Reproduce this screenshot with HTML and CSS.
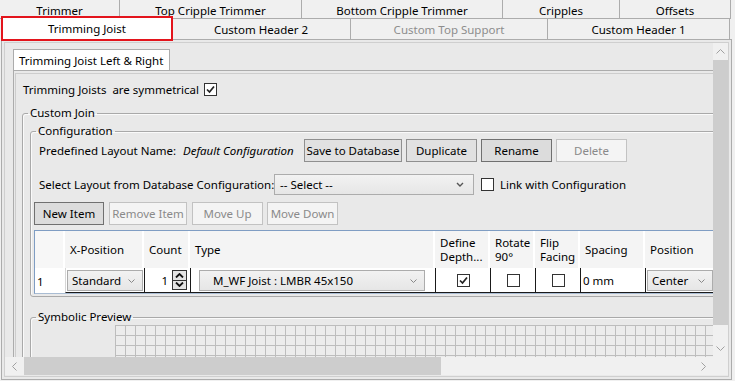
FILE: index.html
```html
<!DOCTYPE html>
<html lang="en">
<head>
  <meta charset="UTF-8" />
  <title>Trimming Joist</title>
  <link rel="stylesheet" href="styles.css">
</head>
<body>
  <!-- main tab strip, two rows -->
  <div class="tabstrip">
    <div class="tabrow first">
      <div class="tab">Trimmer</div>
      <div class="tab">Top Cripple Trimmer</div>
      <div class="tab">Bottom Cripple Trimmer</div>
      <div class="tab">Cripples</div>
      <div class="tab">Offsets</div>
    </div>
    <div class="tabrow second">
      <div class="tab selected">Trimming Joist</div>
      <div class="tab">Custom Header 2</div>
      <div class="tab disabled">Custom Top Support</div>
      <div class="tab">Custom Header 1</div>
    </div>
  </div>

  <div class="pane">
    <div class="pane-inner">
      <div class="scroller">
        <div class="viewport">
          <div class="content">
            <div class="inner-tab">Trimming Joist Left &amp; Right</div>
            <div class="inner-page">
              <div class="inner-frame">
                <div class="sym-row">
                  <span class="sym-label">Trimming Joists&nbsp; are symmetrical</span>
                  <span class="check">
                    <svg width="11" height="11" viewBox="0 0 11 11"><path d="M2 5.5 L4.5 8 L9 2.5" fill="none" stroke="#222" stroke-width="1.7"/></svg>
                  </span>
                </div>

                <fieldset class="group join">
                  <legend>Custom Join</legend>

                  <fieldset class="group config">
                    <legend>Configuration</legend>

                    <div class="row predefined">
                      <span class="lbl-name">Predefined Layout Name:</span>
                      <span class="lbl-value">Default Configuration</span>
                      <button class="btn w-save">Save to Database</button>
                      <button class="btn w-71">Duplicate</button>
                      <button class="btn w-71 strong">Rename</button>
                      <button class="btn w-71" disabled>Delete</button>
                    </div>

                    <div class="row select-row">
                      <span class="lbl-select">Select Layout from Database Configuration:</span>
                      <div class="combo w-select">
                        <span>-- Select --</span>
                        <svg class="chev" width="8" height="5" viewBox="0 0 8 5"><path d="M1 1 L4 4 L7 1" fill="none" stroke="#555" stroke-width="1.4"/></svg>
                      </div>
                      <span class="check empty"></span>
                      <span class="link-lbl">Link with Configuration</span>
                    </div>

                    <div class="row actions">
                      <button class="btn strong w-new">New Item</button>
                      <button class="btn w-remove" disabled>Remove Item</button>
                      <button class="btn w-move" disabled>Move Up</button>
                      <button class="btn w-move" disabled>Move Down</button>
                    </div>

                    <div class="datagrid">
                      <div class="gh corner"></div>
                      <div class="gh">X-Position</div>
                      <div class="gh">Count</div>
                      <div class="gh">Type</div>
                      <div class="gh">Define<br>Depth...</div>
                      <div class="gh">Rotate<br>90°</div>
                      <div class="gh">Flip<br>Facing</div>
                      <div class="gh">Spacing</div>
                      <div class="gh">Position</div>

                      <div class="gc rowhead">1</div>
                      <div class="gc first-col">
                        <div class="combo cell-combo w-std">
                          <span>Standard</span>
                          <svg class="chev" width="7" height="4" viewBox="0 0 7 4"><path d="M0.5 0.5 L3.5 3.5 L6.5 0.5" fill="none" stroke="#888" stroke-width="1"/></svg>
                        </div>
                      </div>
                      <div class="gc count">
                        <span>1</span>
                        <div class="spinner">
                          <div class="spin"><svg width="9" height="5" viewBox="0 0 9 5"><path d="M1 4.5 L4.5 1 L8 4.5" fill="none" stroke="#111" stroke-width="1.8"/></svg></div>
                          <div class="spin"><svg width="9" height="5" viewBox="0 0 9 5"><path d="M1 0.5 L4.5 4 L8 0.5" fill="none" stroke="#111" stroke-width="1.8"/></svg></div>
                        </div>
                      </div>
                      <div class="gc">
                        <div class="combo cell-combo w-type">
                          <span>M_WF Joist : LMBR 45x150</span>
                          <svg class="chev" width="7" height="4" viewBox="0 0 7 4"><path d="M0.5 0.5 L3.5 3.5 L6.5 0.5" fill="none" stroke="#888" stroke-width="1"/></svg>
                        </div>
                      </div>
                      <div class="gc center">
                        <span class="check">
                          <svg width="11" height="11" viewBox="0 0 11 11"><path d="M2 5.5 L4.5 8 L9 2.5" fill="none" stroke="#222" stroke-width="1.7"/></svg>
                        </span>
                      </div>
                      <div class="gc center"><span class="check empty"></span></div>
                      <div class="gc center"><span class="check empty"></span></div>
                      <div class="gc spacing">0 mm</div>
                      <div class="gc">
                        <div class="combo cell-combo w-pos">
                          <span>Center</span>
                          <svg class="chev" width="7" height="4" viewBox="0 0 7 4"><path d="M0.5 0.5 L3.5 3.5 L6.5 0.5" fill="none" stroke="#888" stroke-width="1"/></svg>
                        </div>
                      </div>
                    </div>
                  </fieldset>

                  <fieldset class="group preview">
                    <legend>Symbolic Preview</legend>
                    <div class="preview-grid"></div>
                  </fieldset>
                </fieldset>
              </div>
            </div>
          </div>
        </div>

        <div class="vscroll">
          <div class="arrow">
            <svg width="9" height="5" viewBox="0 0 9 5"><path d="M0.5 4.5 L4.5 0.5 L8.5 4.5" fill="none" stroke="#a0a0a0" stroke-width="1"/></svg>
          </div>
          <div class="vthumb"></div>
          <div class="vtrack"></div>
          <div class="arrow">
            <svg width="9" height="5" viewBox="0 0 9 5"><path d="M0.5 0.5 L4.5 4.5 L8.5 0.5" fill="none" stroke="#a0a0a0" stroke-width="1"/></svg>
          </div>
        </div>
      </div>

      <div class="hscroll">
        <div class="harrow">
          <svg width="5" height="9" viewBox="0 0 5 9"><path d="M4.5 0.5 L0.5 4.5 L4.5 8.5" fill="none" stroke="#a0a0a0" stroke-width="1"/></svg>
        </div>
        <div class="hthumb"></div>
        <div class="htrack"></div>
        <div class="harrow">
          <svg width="5" height="9" viewBox="0 0 5 9"><path d="M0.5 0.5 L4.5 4.5 L0.5 8.5" fill="none" stroke="#a0a0a0" stroke-width="1"/></svg>
        </div>
        <div class="corner-box"></div>
      </div>
    </div>
  </div>
</body>
</html>
```

FILE: styles.css
```css
* {
  margin: 0;
  padding: 0;
  box-sizing: border-box;
}

body {
  font-family: "Noto Sans", "Liberation Sans", sans-serif;
  font-size: 11.5px;
  color: #000;
  background: #f0f0f0;
  width: 735px;
  height: 381px;
  overflow: hidden;
}

/* ---------- outer tabs ---------- */

.tabstrip {
  height: 39px;
}

.tabrow {
  display: flex;
}

.tabrow.first {
  height: 19px;
}

.tabrow.second {
  height: 20px;
  padding-left: 2px;
}

.tab {
  display: flex;
  align-items: center;
  justify-content: center;
  background: #f0f0f0;
  border-right: 1px solid #acacac;
  white-space: nowrap;
}

.tabrow.first .tab {
  border-bottom: 1px solid #acacac;
  padding-top: 2px;
}

.tabrow.first .tab:nth-child(1) { width: 120px; }
.tabrow.first .tab:nth-child(2) { width: 182px; }
.tabrow.first .tab:nth-child(3) { width: 201px; }
.tabrow.first .tab:nth-child(4) { width: 117px; }
.tabrow.first .tab:nth-child(5) { width: 111px; }

.tabrow.second .tab:nth-child(1) { width: 170px; }
.tabrow.second .tab:nth-child(2) { width: 179px; }
.tabrow.second .tab:nth-child(3) { width: 197px; }
.tabrow.second .tab:nth-child(4) { width: 182px; }

.tab.disabled {
  color: #8d8d8d;
}

.tab.selected {
  position: relative;
  z-index: 2;
  height: 23px;
  margin-top: -2px;
  background: #fff;
  border: 1px solid #acacac;
  border-bottom: none;
  outline: 2px solid #e3141c;
  outline-offset: -1px;
  padding-bottom: 1px;
}

/* ---------- pane + scroll viewer ---------- */

.pane {
  margin-left: 1px;
  width: 731px;
  height: 341px;
  border: 1px solid #acacac;
  background: #e9e9e9;
  padding: 2px;
}

.pane-inner {
  height: 100%;
  border: 1px solid #cfcfcf;
  display: flex;
  flex-direction: column;
}

.scroller {
  display: flex;
  height: 314px;
}

.viewport {
  flex: 1;
  overflow: hidden;
}

.vscroll {
  width: 15px;
  background: #f0f0f0;
  display: flex;
  flex-direction: column;
}

.vscroll .arrow {
  height: 17px;
  display: flex;
  align-items: center;
  justify-content: center;
}

.vthumb {
  height: 265px;
  background: #cdcdcd;
}

.vtrack {
  flex: 1;
}

.hscroll {
  height: 18px;
  display: flex;
  background: #f0f0f0;
}

.harrow {
  width: 19px;
  display: flex;
  align-items: center;
  justify-content: center;
}

.hthumb {
  width: 417px;
  background: #cdcdcd;
}

.htrack {
  flex: 1;
}

.corner-box {
  width: 15px;
}

/* ---------- inner tab control ---------- */

.content {
  width: 820px;
  padding: 6px 0 0 8px;
}

.inner-tab {
  width: 157px;
  height: 21px;
  display: flex;
  align-items: center;
  padding-left: 5px;
  background: #fff;
  border: 1px solid #acacac;
  border-bottom: none;
  white-space: nowrap;
}

.inner-page {
  border: 1px solid #acacac;
  padding: 2px 0 0 1px;
  height: 420px;
}

.inner-frame {
  height: 100%;
  border-top: 1px solid #cdcdcd;
  border-left: 1px solid #cdcdcd;
  padding: 8px 0 0 6px;
}

.sym-row {
  display: flex;
  align-items: center;
  height: 14px;
  padding-left: 1px;
}

.sym-label {
  width: 181px;
  white-space: nowrap;
}

/* ---------- checkboxes ---------- */

.check {
  width: 13px;
  height: 13px;
  border: 1px solid #333;
  background: #fff;
  display: inline-flex;
  align-items: center;
  justify-content: center;
}

/* ---------- group boxes ---------- */

.group {
  border: 1px solid #a9a9a9;
  border-radius: 3px;
  padding: 0 0 0 3px;
  box-shadow: inset 1px 1px 0 #fafafa;
}

.group legend {
  padding: 0 2px;
  margin-left: 2px;
  line-height: 14px;
}

.join {
  margin-top: 10px;
  padding-bottom: 40px;
}

.config {
  margin: 4px 0 0 4px;
  padding-bottom: 2px;
}

.preview {
  margin: 13px 0 0 4px;
  padding-bottom: 40px;
}

.preview-grid {
  margin: 1px 0 0 81px;
  width: 700px;
  height: 40px;
  background-color: #ececec;
  background-image:
    linear-gradient(to right, #bdbdbd 1px, transparent 1px),
    linear-gradient(to bottom, #bdbdbd 1px, transparent 1px);
  background-size: 10px 10px;
}

/* ---------- rows in configuration ---------- */

.row {
  display: flex;
  align-items: center;
  white-space: nowrap;
}

.predefined {
  margin: 1px 0 0 5px;
  height: 23px;
}

.lbl-name { width: 144px; }

.lbl-value {
  width: 121px;
  font-style: italic;
}

.select-row {
  margin: 12px 0 0 5px;
  height: 21px;
}

.lbl-select { width: 235px; }

.select-row .check {
  margin-left: 7px;
}

.link-lbl {
  margin-left: 6px;
}

.actions {
  margin-top: 7px;
  height: 23px;
}

/* ---------- buttons ---------- */

.btn {
  font-family: inherit;
  font-size: 11.5px;
  color: #000;
  height: 23px;
  background: #e1e1e1;
  border: 1px solid #8f8f8f;
  margin-right: 4px;
}

.btn.strong {
  background: #dcdcdc;
  border-color: #707070;
}

.btn:disabled {
  background: #f4f4f4;
  border-color: #c2c2c2;
  color: #8a8a8a;
}

.w-save { width: 98px; }
.w-71 { width: 71px; }
.w-new { width: 70px; margin-right: 5px; }
.w-remove { width: 78px; margin-right: 5px; }
.w-move { width: 71px; }

/* ---------- combo boxes ---------- */

.combo {
  height: 21px;
  display: flex;
  align-items: center;
  justify-content: space-between;
  padding: 0 9px 0 5px;
  background: linear-gradient(#f2f2f2, #e6e6e6);
  border: 1px solid #acacac;
}

.w-select { width: 200px; }

.cell-combo {
  margin: 2px 0 0 1px;
  padding: 0 7px 0 4px;
}

.w-std { width: 76px; }
.w-type { width: 226px; margin-left: 8px; padding-left: 13px; }
.w-pos { width: 66px; }

/* ---------- data grid ---------- */

.datagrid {
  margin-top: 5px;
  display: grid;
  grid-template-columns: 30px 79px 46px 245px 55px 45px 45px 65px 90px;
  grid-template-rows: 37px 25px;
  width: max-content;
  background: #fff;
  border-top: 1px solid #7f9dc3;
  border-left: 1px solid #7f9dc3;
  border-bottom: 1px solid #a9bcd3;
}

.gh {
  background: #f4f4f4;
  border-right: 2px solid #fff;
  display: flex;
  align-items: center;
  padding-left: 5px;
  line-height: 14px;
}

.gh.corner {
  background: #f7f7f7;
}

.gc {
  border-left: 1px solid #1a1a1a;
  border-bottom: 1px solid #1a1a1a;
  display: flex;
  align-items: flex-start;
}

.gc.rowhead {
  border: none;
  align-items: center;
  padding: 1px 0 0 2px;
}

.gc.first-col {
  border-left-color: #d6d6d6;
}

.gc.center {
  align-items: center;
  justify-content: center;
}

.gc.count {
  align-items: center;
  justify-content: flex-end;
  padding-right: 3px;
}

.spinner {
  width: 15px;
  height: 20px;
  margin-left: 4px;
  border: 1px solid #333;
  background: #e4e4e4;
  display: flex;
  flex-direction: column;
}

.spin {
  flex: 1;
  display: flex;
  align-items: center;
  justify-content: center;
}

.spin + .spin {
  border-top: 1px solid #333;
}

.gc.spacing {
  align-items: center;
  padding-left: 2px;
}
```
